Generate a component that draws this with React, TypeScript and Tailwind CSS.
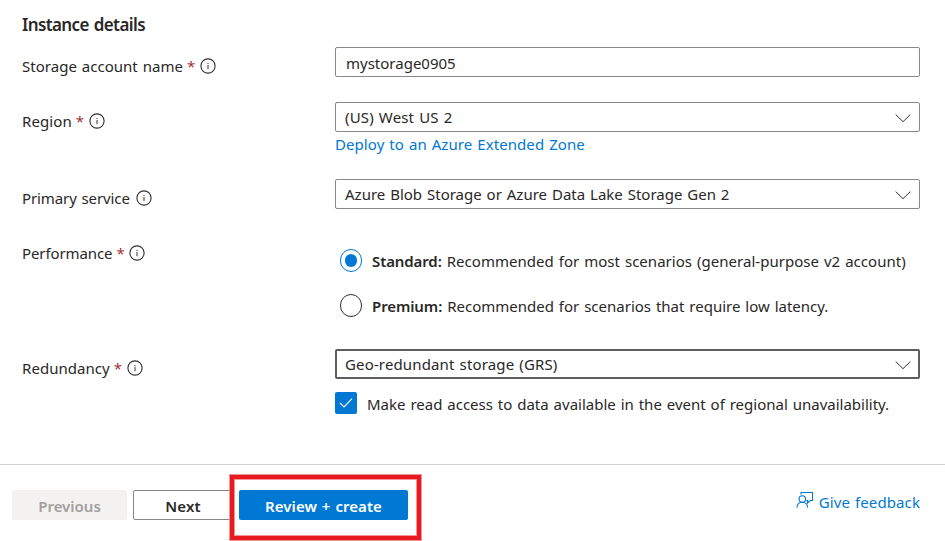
import type { ReactNode } from "react";

function InfoIcon() {
  return (
    <svg className="block h-4 w-4 shrink-0" viewBox="0 0 16 16" fill="none">
      <circle cx="8" cy="8" r="7.1" stroke="#323130" strokeWidth="1.1" />
      <path d="M8 7V11.2" stroke="#323130" strokeWidth="1" />
      <path d="M8 5V6" stroke="#323130" strokeWidth="1" />
    </svg>
  );
}

function Chevron() {
  return (
    <svg className="block h-4 w-4 shrink-0" viewBox="0 0 16 16" fill="none">
      <path d="M0.7 4.6L8 11.7L15.3 4.6" stroke="#323130" strokeWidth="1" />
    </svg>
  );
}

interface RowProps {
  label: string;
  tracking: string;
  height: string;
  required?: boolean;
  children: ReactNode;
}

function Row({ label, tracking, height, required, children }: RowProps) {
  return (
    <div className={`flex ${height}`}>
      <div className="mt-[9px] flex h-5 w-[313px] shrink-0 items-center">
        <span className={`whitespace-nowrap ${tracking}`}>{label}</span>
        {required && (
          <span className="ml-[4px] w-[7px] font-['Open_Sans',sans-serif] text-[15px] text-[#a4262c]">*</span>
        )}
        <span className="ml-[6px]">
          <InfoIcon />
        </span>
      </div>
      <div className="flex-1">{children}</div>
    </div>
  );
}

function Select({ value, tracking, focused }: { value: string; tracking: string; focused?: boolean }) {
  return (
    <div
      className={`flex h-[30px] items-center justify-between rounded-[2px] ${
        focused ? "border-2 border-[#605e5c] pr-[7px] pl-2" : "border border-[#8a8886] pr-2 pl-[9px]"
      }`}
    >
      <span className={`whitespace-nowrap ${tracking}`}>{value}</span>
      <span className="pt-px">
        <Chevron />
      </span>
    </div>
  );
}

export default function App() {
  return (
    <div className="h-[541px] w-[945px] overflow-hidden bg-white font-['Noto_Sans',sans-serif] text-[15px] leading-5 text-[#292827] [word-spacing:1px]">
      <div className="h-[464px] pr-[25px] pl-[22px]">
        <div className="h-[47px] pt-[15px]">
          <h2 className="text-[17px] font-semibold tracking-[-0.6px] whitespace-nowrap">Instance details</h2>
        </div>
        <Row label="Storage account name" tracking="tracking-[0.02px]" height="h-[55px]" required>
          <div className="flex h-[30px] items-center rounded-[2px] border border-[#8a8886] pt-[2px] pl-[10px]">
            <span>mystorage0905</span>
          </div>
        </Row>
        <Row label="Region" tracking="tracking-[0.1px]" height="h-[77px]" required>
          <Select value="(US) West US 2" tracking="tracking-[0.15px]" />
          <a className="mt-[2px] block tracking-[0.07px] whitespace-nowrap text-[#0078d4]">Deploy to an Azure Extended Zone</a>
        </Row>
        <Row label="Primary service" tracking="tracking-[-0.1px]" height="h-[55px]">
          <Select value="Azure Blob Storage or Azure Data Lake Storage Gen 2" tracking="tracking-[0px]" />
        </Row>
        <Row label="Performance" tracking="tracking-[-0.1px]" height="h-[115px]" required>
          <div className="flex flex-col gap-[22px] pt-[15px] pl-[5px]">
            <div className="flex h-[23px] items-center">
              <span className="flex h-[23px] w-[22px] items-center justify-center rounded-full border border-[#0078d4]">
                <span className="h-[13px] w-3 rounded-full bg-[#0078d4]" />
              </span>
              <span className="mt-px ml-[10px] font-semibold tracking-[-0.1px] whitespace-nowrap">Standard:</span>
              <span className="mt-px ml-[5px] tracking-[0.03px] whitespace-nowrap">
                Recommended for most scenarios (general-purpose v2 account)
              </span>
            </div>
            <div className="flex h-[23px] items-center">
              <span className="h-[23px] w-[22px] rounded-full border border-[#323130]" />
              <span className="mt-px ml-[10px] font-semibold tracking-[-0.1px] whitespace-nowrap">Premium:</span>
              <span className="mt-px ml-[5px] whitespace-nowrap">Recommended for scenarios that require low latency.</span>
            </div>
          </div>
        </Row>
        <Row label="Redundancy" tracking="tracking-[0.05px]" height="h-[115px]" required>
          <Select value="Geo-redundant storage (GRS)" tracking="tracking-[0.14px]" focused />
          <div className="mt-[13px] flex h-[22px] items-center">
            <span className="flex size-[22px] items-center justify-center rounded-[2px] bg-[#0078d4]">
              <svg className="block h-4 w-4" viewBox="0 0 16 16" fill="none">
                <path d="M1.8 7.8L6 12L14 3.6" stroke="#fff" strokeWidth="1.1" />
              </svg>
            </span>
            <span className="mt-[2px] ml-[10px] whitespace-nowrap">
              Make read access to data available in the event of regional unavailability.
            </span>
          </div>
        </Row>
      </div>
      <div className="relative flex h-[77px] items-start border-t border-[#d2d0ce] pt-[25px] pr-[25px] pl-3 font-semibold">
        <div className="flex h-[30px] w-[115px] items-center justify-center rounded-[2px] bg-[#f3f2f1] pt-[2px] text-[#a19f9d]">
          <span>Previous</span>
        </div>
        <div className="ml-[6px] flex h-[30px] w-[100px] items-center justify-center rounded-[2px] border border-[#8a8886] pt-[2px]">
          <span className="tracking-[0.1px]">Next</span>
        </div>
        <div className="ml-[6px] flex h-[30px] w-[169px] items-center justify-center rounded-[2px] bg-[#0078d4] pt-[2px] text-white">
          <span className="tracking-[0.05px]">Review + create</span>
        </div>
        <div className="ml-auto flex items-start font-normal text-[#0078d4]">
          <svg className="mt-px mr-[5px] block h-[18px] w-[18px]" viewBox="0 0 18 18" fill="none" stroke="#0078d4" strokeWidth="1.1">
            <path d="M5 3.6V1.5H16.5V9.5H14.2L11.5 12V9.5H10.2" />
            <circle cx="6.3" cy="8" r="3.2" />
            <path d="M0.9 16.8C1.1 13.4 3.3 11.2 6.3 11.2S11.5 13.4 11.7 16.8" />
          </svg>
          <span className="pt-[2px] tracking-[0.1px]">Give feedback</span>
        </div>
        <div className="absolute top-[9px] left-[229px] h-[67px] w-[193px] border border-[#f29497]">
          <div className="h-full border-4 border-[#e81a1f] shadow-[inset_0_0_0_1px_#f29497]" />
        </div>
      </div>
    </div>
  );
}
